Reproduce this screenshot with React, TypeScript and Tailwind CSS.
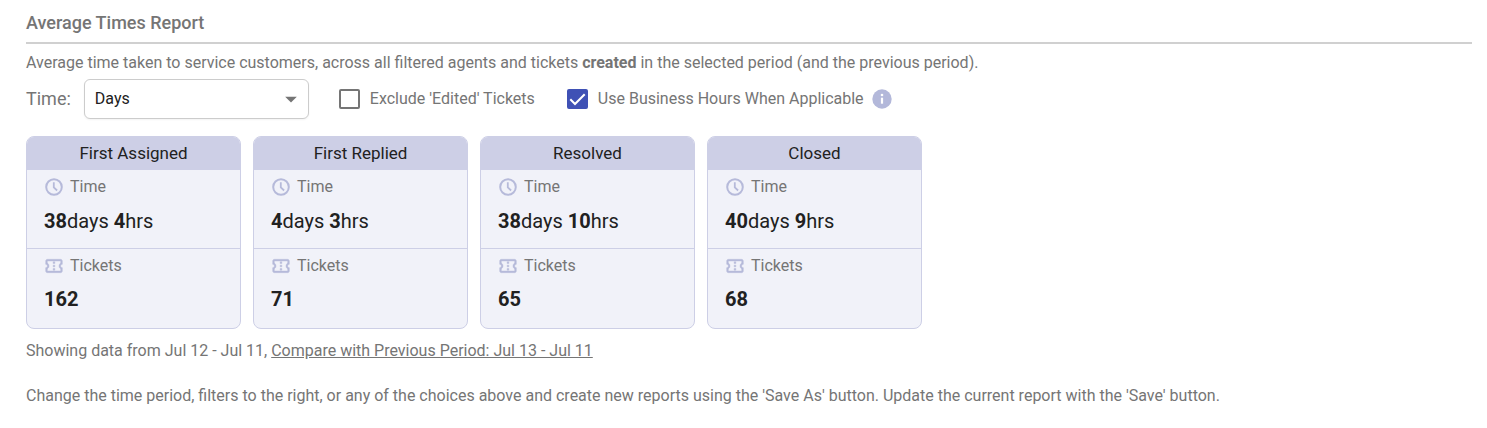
import { useState } from "react";
import { MdArrowDropDown } from "react-icons/md";

type Part = { value: number; unit: string };
type Stat = { title: string; time: Part[]; tickets: number };

const stats: Stat[] = [
  { title: "First Assigned", time: [{ value: 38, unit: "days" }, { value: 4, unit: "hrs" }], tickets: 162 },
  { title: "First Replied", time: [{ value: 4, unit: "days" }, { value: 3, unit: "hrs" }], tickets: 71 },
  { title: "Resolved", time: [{ value: 38, unit: "days" }, { value: 10, unit: "hrs" }], tickets: 65 },
  { title: "Closed", time: [{ value: 40, unit: "days" }, { value: 9, unit: "hrs" }], tickets: 68 },
];

function ClockIcon() {
  return (
    <svg viewBox="0 0 20 20" className="h-5 w-5 shrink-0 text-[#b6bada]" fill="none" stroke="currentColor" aria-hidden="true">
      <circle cx="10" cy="10" r="7.8" strokeWidth="2" />
      <path d="M9.800 5.300v5l3.300 3.200" strokeWidth="1.800" />
    </svg>
  );
}

function TicketIcon() {
  return (
    <svg viewBox="0 0 24 24" className="h-5 w-5 shrink-0 text-[#b6bada]" fill="currentColor" stroke="currentColor" strokeWidth="0.5" aria-hidden="true">
      <path d="M22 10V6c0-1.110-.9-2-2-2H4c-1.100 0-1.990.890-1.990 2v4c1.100 0 1.990.900 1.990 2s-.890 2-2 2v4c0 1.100.900 2 2 2h16c1.100 0 2-.900 2-2v-4c-1.100 0-2-.900-2-2s.900-2 2-2zm-2-1.460c-1.190.690-2 1.990-2 3.460s.810 2.770 2 3.460V18H4v-2.540c1.190-.690 2-1.990 2-3.460 0-1.480-.800-2.770-1.990-3.460L4 6h16v2.540zM11 15h2v2h-2v-2zm0-4h2v2h-2v-2zm0-4h2v2h-2V7z" />
    </svg>
  );
}

function InfoIcon() {
  return (
    <svg viewBox="0 0 20 20" className="ml-2 h-5 w-5 shrink-0" aria-hidden="true">
      <circle cx="10" cy="10" r="9.7" fill="#b3b8da" />
      <circle cx="10" cy="6" r="1.3" fill="white" />
      <path d="M10 8.700v6" stroke="white" strokeWidth="2.200" />
    </svg>
  );
}

function StatCard({ title, time, tickets }: Stat) {
  return (
    <article className="w-[215px] overflow-hidden rounded-lg border border-[#cdcfe6] bg-[#f1f2f9]">
      <h2 className="bg-[#cdcfe6] text-center text-[17px] leading-[33px] text-[#212121]">{title}</h2>
      <div className="h-[79px] border-b border-[#cdcfe6] px-[17px] pt-[5px]">
        <div className="flex items-center gap-1.5 text-base leading-6">
          <ClockIcon />
          Time
        </div>
        <p className="pt-2 text-xl leading-7 text-[#212121]">
          {time.map((part, i) => (
            <span key={part.unit}>
              {i > 0 && " "}
              <b>{part.value}</b>
              {part.unit}
            </span>
          ))}
        </p>
      </div>
      <div className="h-[79px] px-[17px] pt-[5px]">
        <div className="flex items-center gap-1.5 text-base leading-6">
          <TicketIcon />
          Tickets
        </div>
        <p className="pt-[7px] text-xl leading-7 font-bold text-[#212121]">{tickets}</p>
      </div>
    </article>
  );
}

function Check({ label, checked, onChange }: { label: string; checked: boolean; onChange: (v: boolean) => void }) {
  return (
    <label className="flex cursor-pointer items-center gap-2.5">
      <span className="grid h-5 w-[21px] place-items-center">
        <input
          type="checkbox"
          className="col-start-1 row-start-1 h-5 w-[21px] appearance-none rounded-xs border-2 border-[#757575] bg-white checked:border-[#3f51b5] checked:bg-[#3f51b5]"
          checked={checked}
          onChange={(e) => onChange(e.target.checked)}
        />
        {checked && (
          <svg viewBox="0 0 21 20" className="pointer-events-none z-10 col-start-1 row-start-1 h-5 w-[21px]" fill="none" stroke="white" strokeWidth="2" aria-hidden="true">
            <path d="M3.300 10.300 8 15 17.700 5.200" />
          </svg>
        )}
      </span>
      {label}
    </label>
  );
}

export default function App() {
  const [exclude, setExclude] = useState(false);
  const [business, setBusiness] = useState(true);
  return (
    <main className="bg-white pt-3 pr-[15px] pb-5 pl-[26px] font-['Roboto',sans-serif] text-base text-[#757575]">
      <h1 className="border-b-2 border-[#d0d0d0] pb-2 text-lg leading-[22px] font-medium">Average Times Report</h1>
      <p className="pt-[7px] leading-6">
        Average time taken to service customers, across all filtered agents and tickets <b>created</b> in the selected
        period (and the previous period).
      </p>
      <div className="flex flex-wrap items-center pt-1">
        <label htmlFor="unit" className="mr-[13px] text-lg">Time:</label>
        <div className="relative mr-[30px]">
          <select
            id="unit"
            className="h-10 w-[225px] appearance-none rounded-md border border-[#cccccc] bg-white pl-2.5 text-base text-[#212121] shadow-xs"
          >
            <option>Days</option>
            <option>Hours</option>
          </select>
          <MdArrowDropDown className="pointer-events-none absolute top-1.5 right-1 h-7 w-7" aria-hidden="true" />
        </div>
        <div className="mr-8">
          <Check label="Exclude 'Edited' Tickets" checked={exclude} onChange={setExclude} />
        </div>
        <Check label="Use Business Hours When Applicable" checked={business} onChange={setBusiness} />
        <InfoIcon />
      </div>
      <section className="flex flex-wrap gap-3 pt-[17px]">
        {stats.map((s) => (
          <StatCard key={s.title} {...s} />
        ))}
      </section>
      <p className="pt-2.5 leading-6">
        Showing data from Jul 12 - Jul 11, <a href="#compare" className="underline">Compare with Previous Period: Jul 13 - Jul 11</a>
      </p>
      <p className="pt-[21px] leading-6">
        Change the time period, filters to the right, or any of the choices above and create new reports using the 'Save
        As' button. Update the current report with the 'Save' button.
      </p>
    </main>
  );
}
